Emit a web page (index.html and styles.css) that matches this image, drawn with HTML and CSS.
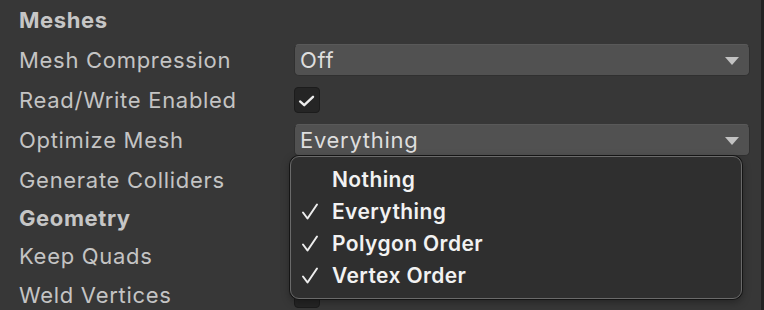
FILE: index.html
```html
<!DOCTYPE html>
<html lang="en">
<head>
  <meta charset="UTF-8">
  <title>Model Import Settings</title>
  <link rel="stylesheet" href="styles.css">
</head>
<body>
  <div class="inspector">
    <div class="row header">Meshes</div>
    <div class="row">
      <span class="label">Mesh Compression</span>
      <div class="field popup-field"><span>Off</span><i class="arrow"></i></div>
    </div>
    <div class="row">
      <span class="label">Read/Write Enabled</span>
      <div class="toggle checked">
        <svg viewBox="0 0 26 26" width="26" height="26"><path d="M5.5 13.5 L10 17.5 L19.5 8.5" fill="none" stroke="#ececec" stroke-width="2.6" stroke-linecap="round" stroke-linejoin="round"/></svg>
      </div>
    </div>
    <div class="row">
      <span class="label">Optimize Mesh</span>
      <div class="field popup-field"><span>Everything</span><i class="arrow"></i></div>
    </div>
    <div class="row">
      <span class="label">Generate Colliders</span>
      <div class="toggle"></div>
    </div>
    <div class="row header geo">Geometry</div>
    <div class="row keep">
      <span class="label">Keep Quads</span>
      <div class="toggle"></div>
    </div>
    <div class="row">
      <span class="label">Weld Vertices</span>
      <div class="toggle"></div>
    </div>
  </div>

  <!-- open mask menu for Optimize Mesh -->
  <ul class="menu">
    <li>Nothing</li>
    <li><svg class="tick" viewBox="0 0 18 18" width="18" height="18"><path d="M2 9.5 L6.5 15.5 L16 1.5" fill="none" stroke="#ededed" stroke-width="2" stroke-linecap="round" stroke-linejoin="round"/></svg>Everything</li>
    <li><svg class="tick" viewBox="0 0 18 18" width="18" height="18"><path d="M2 9.5 L6.5 15.5 L16 1.5" fill="none" stroke="#ededed" stroke-width="2" stroke-linecap="round" stroke-linejoin="round"/></svg>Polygon Order</li>
    <li><svg class="tick" viewBox="0 0 18 18" width="18" height="18"><path d="M2 9.5 L6.5 15.5 L16 1.5" fill="none" stroke="#ededed" stroke-width="2" stroke-linecap="round" stroke-linejoin="round"/></svg>Vertex Order</li>
  </ul>
  <div class="edge"></div>
</body>
</html>
```

FILE: styles.css
```css
body { margin: 0; background: #373737; font-family: Inter, "Noto Sans", sans-serif; width: 764px; height: 310px; overflow: hidden; position: relative; }
.inspector { display: flex; flex-direction: column; padding-left: 19px; width: 731px; }
.row { display: grid; grid-template-columns: 275px 456px; align-items: center; height: 40px; color: #c4c4c4; font-size: 22px; letter-spacing: 0.7px; }
.header { display: flex; font-weight: 700; font-size: 22px; letter-spacing: 0.6px; color: #c6c6c6; }
.geo { height: 36px; }
.keep { height: 39px; }
.field { height: 32px; box-sizing: border-box; border-radius: 5px; background: #515151; border: 1px solid #303030; border-top-color: #595959; display: flex; align-items: center; justify-content: space-between; padding: 0 10px 0 5px; color: #dedede; }
.arrow { width: 0; height: 0; border-left: 7px solid transparent; border-right: 7px solid transparent; border-top: 8px solid #c2c2c2; margin-top: 2px; }
.toggle { width: 26px; height: 26px; box-sizing: border-box; border-radius: 4px; background: #252525; border: 1px solid #1c1c1c; display: flex; }
.menu { position: absolute; left: 290px; top: 156px; width: 452px; height: 143px; box-sizing: border-box; margin: 0; padding: 7px 0 0 0; list-style: none; background: #2f2f2f; border-radius: 9px; border: 1px solid #6a6a6a; box-shadow: 0 0 0 1px #151515, 0 3px 8px rgba(0,0,0,0.35); }
.menu li { height: 32px; line-height: 32px; padding-left: 41px; position: relative; color: #f2f2f2; font-size: 21px; font-weight: 600; letter-spacing: 0.4px; }
.tick { position: absolute; left: 10px; top: 7px; }
.edge { position: absolute; right: 0; top: 0; width: 3px; height: 310px; background: #222; }
```
